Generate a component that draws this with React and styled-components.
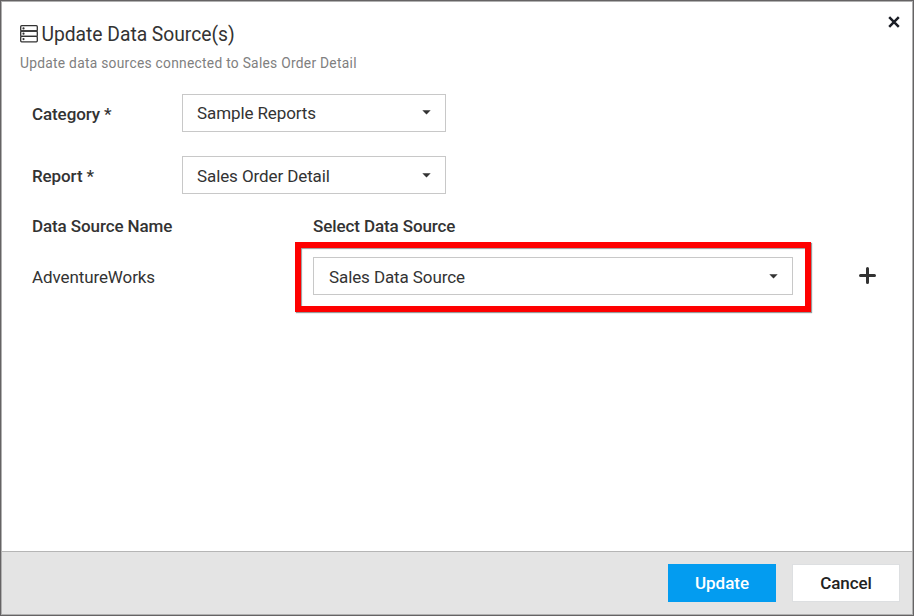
import React from "react";
import styled, { createGlobalStyle } from "styled-components";

const GlobalStyle = createGlobalStyle`
  * { box-sizing: border-box; }
  body { margin: 0; font-family: Roboto, sans-serif; color: #333; }
`;

const Dialog = styled.div`
  display: flex;
  flex-direction: column;
  width: 914px;
  height: 616px;
  border: 1px solid #656364;
  background: #fff;
`;

const Inner = styled.div`
  flex: 1;
  display: flex;
  flex-direction: column;
  border: 1px solid #b0b0b0;
`;

const Header = styled.header`
  display: flex;
  justify-content: space-between;
  align-items: flex-start;
  height: 92px;
  padding: 20px 12px 0 18px;
`;

const Title = styled.h1`
  display: flex;
  align-items: center;
  gap: 3.5px;
  margin: 0;
  font-size: 19.3px;
  font-weight: 400;
  line-height: 24px;

  span {
    padding-top: 1px;
    margin-bottom: -1px;
    letter-spacing: -0.03px;
  }
`;

const Subtitle = styled.p`
  margin: 9px 0 0;
  font-size: 13.8px;
  line-height: 16px;
  letter-spacing: 0.27px;
  color: #808080;
`;

const IconButton = styled.button`
  display: flex;
  align-self: start;
  padding: 0;
  border: 0;
  background: none;
  color: ${(p) => p.$color || "#333"};
  margin: ${(p) => p.$margin || "0"};
`;

const Body = styled.main`
  flex: 1;
  padding: 0 30px;
  font-size: 17px;
  line-height: 20px;
  letter-spacing: -0.1px;
`;

const Field = styled.div`
  display: grid;
  grid-template-columns: 150px 264px;
  align-items: center;
  height: 38px;
  margin-bottom: ${(p) => p.$gap}px;
`;

const Label = styled.span`
  font-weight: 500;
  padding-top: 2px;
`;

const Select = styled.div`
  display: flex;
  align-items: flex-start;
  justify-content: space-between;
  height: 38px;
  padding: ${(p) => p.$top}px 14px 0 ${(p) => p.$left}px;
  border: 1px solid #c8c8c8;

  svg {
    margin-top: 7px;
  }
`;

const Sources = styled.div`
  display: grid;
  grid-template-columns: 263px 517px 1fr;
  grid-template-rows: 26px 70px;
`;

const SourceHeading = styled.div`
  padding-left: ${(p) => p.$indent || 0}px;
  font-weight: 500;
`;

const SourceName = styled.div`
  padding-top: 25px;
`;

const Highlight = styled.div`
  width: 516px;
  height: 70px;
  padding: 9px 12px;
  border: 6px solid #fe0000;
  box-shadow: 1px 1px 1px #999, inset 1px 1px 1px #999;
`;

const Footer = styled.footer`
  display: flex;
  justify-content: flex-end;
  gap: 16px;
  height: 63px;
  padding: 12px 12px 0;
  border-top: 1px solid #b5b5b5;
  background: #e4e4e4;
`;

const Button = styled.button`
  width: 108px;
  height: 38px;
  padding: 0;
  border: 1px solid ${(p) => (p.$primary ? "#039cf0" : "#dddfe1")};
  background: ${(p) => (p.$primary ? "#039cf0" : "#fff")};
  color: ${(p) => (p.$primary ? "#fff" : "#222")};
  font: 500 17px/20px Roboto, sans-serif;
  letter-spacing: -0.05px;
`;

const ServerIcon = () => (
  <svg width="18" height="18" viewBox="0 0 18 18" fill="none" stroke="#333" strokeWidth="1.3">
    <rect x="0.7" y="0.7" width="16.6" height="5.3" rx="1" />
    <rect x="0.7" y="6" width="16.6" height="5.4" rx="1" />
    <rect x="0.7" y="11.4" width="16.6" height="5.4" rx="1" />
    <g fill="#333" stroke="none">
      <circle cx="3.5" cy="3.4" r="1.1" />
      <circle cx="3.5" cy="8.7" r="1.1" />
      <circle cx="3.5" cy="14.1" r="1.1" />
    </g>
  </svg>
);

const Caret = () => (
  <svg width="9" height="5" viewBox="0 0 9 5" fill="#333">
    <path d="M0.3 0.3h8.4L4.5 4.5z" />
  </svg>
);

const CloseIcon = () => (
  <svg width="12" height="12" viewBox="0 0 12 12" fill="none" stroke="currentColor" strokeWidth="2.5">
    <path d="M1.2 1.2l9.6 9.6M10.8 1.2l-9.6 9.6" />
  </svg>
);

const PlusIcon = () => (
  <svg width="17" height="17" viewBox="0 0 17 17" fill="none" stroke="currentColor" strokeWidth="3" strokeLinecap="round">
    <path d="M1.5 8.5h14M8.5 1.5v14" />
  </svg>
);

function Dropdown({ value, left = 14, top = 9 }) {
  return (
    <Select $left={left} $top={top}>
      <span>{value}</span>
      <Caret />
    </Select>
  );
}

export default function App() {
  return (
    <>
      <GlobalStyle />
      <Dialog>
        <Inner>
          <Header>
            <div>
              <Title><ServerIcon /><span>Update Data Source(s)</span></Title>
              <Subtitle>Update data sources connected to Sales Order Detail</Subtitle>
            </div>
            <IconButton aria-label="Close" $color="#1b1e26" $margin="-6px 0 0">
              <CloseIcon />
            </IconButton>
          </Header>
          <Body>
            <Field $gap={24}>
              <Label>Category *</Label>
              <Dropdown value="Sample Reports" top={8} />
            </Field>
            <Field $gap={22}>
              <Label>Report *</Label>
              <Dropdown value="Sales Order Detail" />
            </Field>
            <Sources>
              <SourceHeading>Data Source Name</SourceHeading>
              <SourceHeading $indent={18}>Select Data Source</SourceHeading>
              <span />
              <SourceName>AdventureWorks</SourceName>
              <Highlight>
                <Dropdown value="Sales Data Source" left={15} />
              </Highlight>
              <IconButton aria-label="Add data source" $margin="25px 0 0 47px">
                <PlusIcon />
              </IconButton>
            </Sources>
          </Body>
          <Footer>
            <Button $primary>Update</Button>
            <Button>Cancel</Button>
          </Footer>
        </Inner>
      </Dialog>
    </>
  );
}
